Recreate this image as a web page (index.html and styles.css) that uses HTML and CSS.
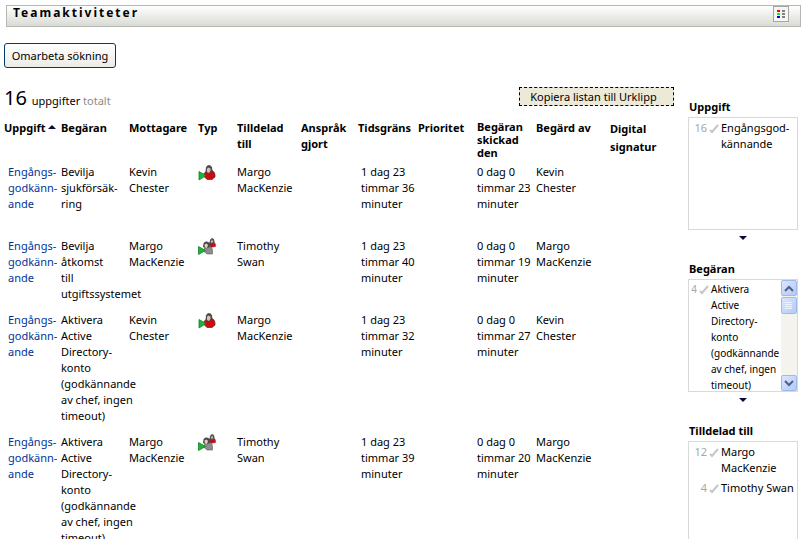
FILE: index.html
```html
<!DOCTYPE html>
<html lang="sv">
<head>
<meta charset="utf-8">
<title>Teamaktiviteter</title>
<link rel="stylesheet" href="styles.css">
</head>
<body>
<svg width="0" height="0" class="defs" aria-hidden="true">
  <symbol id="person" viewBox="0 0 18 17">
    <path d="M5.500 12Q6 7 10 8L14 6.500Q17 8 17 11V13L14 15.500H9Z" fill="#cc0a10" stroke="#7d2a2a" stroke-width=".8"/>
    <path d="M7.500 8L8 3.500Q8.500 1 11 1Q13.500 1 14 3.500L14.500 7L12 9L9.500 9Z" fill="#4a4a4c"/>
    <path d="M9 5L10 3.500L12.500 4.500V6.500L11 9L9 8Z" fill="#e0bfb4"/>
    <path d="M1 7.500L8 11.500L1 16Z" fill="#18b830" stroke="#1c7a2c" stroke-width=".8"/>
  </symbol>
  <symbol id="group" viewBox="0 0 18 17">
    <path d="M10 5.500L15 4Q18 4.500 17.500 8.500L12 9.500Z" fill="#cc0a10" stroke="#803838" stroke-width=".6"/>
    <path d="M11.500 5L12 2Q13 0 14.500 0Q16.500 1 16.500 3V5L14 6Z" fill="#58585a"/>
    <path d="M13 3L14.500 2L15 4L13.500 5Z" fill="#e0bfb4"/>
    <path d="M5.500 13Q6 9 9 10L12.500 8.500Q14.500 10 14.500 13V16H9Z" fill="#8c8c8c" stroke="#5a5a5a" stroke-width=".6"/>
    <path d="M5 9L5.500 5.500Q6.500 3 9 3.500L12 5L12.500 8L10 10L7 10Z" fill="#4a4a4c"/>
    <path d="M6.500 6.500L8.500 5.500L10 7L9 10L7 9.500Z" fill="#e8cbc0"/>
    <path d="M0.500 8.500L7.500 12.500L0.500 16.500Z" fill="#18b830" stroke="#1c7a2c" stroke-width=".8"/>
  </symbol>
  <symbol id="check" viewBox="0 0 10 10"><path d="M1 6L3 8L9 1" fill="none" stroke="#c6c6c6" stroke-width="2"/></symbol>
  <symbol id="down" viewBox="0 0 8 4"><path d="M0 0H8L4 4Z" fill="#0b0b3b"/></symbol>
</svg>
<header class="titlebar">
  <h1>Teamaktiviteter</h1>
  <button class="legend" aria-label="Förklaring">
    <svg width="8" height="8" viewBox="0 0 8 8" shape-rendering="crispEdges"><path d="M0 0h3v2H0z" fill="red"/><path d="M0 3h3v2H0z" fill="#0f0"/><path d="M0 6h3v2H0z" fill="#00f"/><path d="M5 0h3v2H5zM5 3h3v2H5zM5 6h3v2H5z" fill="#808080"/></svg>
  </button>
</header>
<div class="layout">
  <main>
    <button class="refine">Omarbeta sökning</button>
    <div class="summary">
      <p><span class="total">16</span> <span class="unit">uppgifter</span> <span class="muted">totalt</span></p>
      <button class="copy">Kopiera listan till Urklipp</button>
    </div>
    <table>
      <colgroup><col class="c-task"><col class="c-request"><col class="c-recipient"><col class="c-type"><col class="c-assigned"><col class="c-claimed"><col class="c-deadline"><col class="c-priority"><col class="c-sent"><col class="c-by"><col></colgroup>
      <thead>
        <tr>
          <th>Uppgift <svg class="sort" width="8" height="4" viewBox="0 0 8 4"><path d="M0 4H8L4 0Z" fill="#0b0b3b"/></svg></th>
          <th>Begäran</th><th>Mottagare</th><th>Typ</th><th>Tilldelad<br>till</th><th>Anspråk<br>gjort</th><th>Tidsgräns</th><th>Prioritet</th><th class="tight">Begäran<br>skickad<br>den</th><th>Begärd av</th><th class="loose">Digital<br>signatur</th>
        </tr>
      </thead>
      <tbody>
        <tr>
          <td class="task"><a href="#">Engångs-<br>godkänn-<br>ande</a></td>
          <td>Bevilja<br>sjukförsäk-<br>ring</td><td>Kevin<br>Chester</td>
          <td><svg class="type" width="18" height="17"><use href="#person"/></svg></td>
          <td>Margo<br>MacKenzie</td><td></td><td class="due">1 dag 23<br>timmar 36<br>minuter</td><td></td><td>0 dag 0<br>timmar 23<br>minuter</td><td>Kevin<br>Chester</td><td></td>
        </tr>
        <tr>
          <td class="task"><a href="#">Engångs-<br>godkänn-<br>ande</a></td>
          <td>Bevilja<br>åtkomst<br>till<br>utgiftssystemet</td><td>Margo<br>MacKenzie</td>
          <td><svg class="type" width="18" height="17"><use href="#group"/></svg></td>
          <td>Timothy<br>Swan</td><td></td><td class="due">1 dag 23<br>timmar 40<br>minuter</td><td></td><td>0 dag 0<br>timmar 19<br>minuter</td><td>Margo<br>MacKenzie</td><td></td>
        </tr>
        <tr>
          <td class="task"><a href="#">Engångs-<br>godkänn-<br>ande</a></td>
          <td>Aktivera<br>Active<br>Directory-<br>konto<br>(godkännande<br>av chef, ingen<br>timeout)</td><td>Kevin<br>Chester</td>
          <td><svg class="type" width="18" height="17"><use href="#person"/></svg></td>
          <td>Margo<br>MacKenzie</td><td></td><td class="due">1 dag 23<br>timmar 32<br>minuter</td><td></td><td>0 dag 0<br>timmar 27<br>minuter</td><td>Kevin<br>Chester</td><td></td>
        </tr>
        <tr>
          <td class="task"><a href="#">Engångs-<br>godkänn-<br>ande</a></td>
          <td>Aktivera<br>Active<br>Directory-<br>konto<br>(godkännande<br>av chef, ingen<br>timeout)</td><td>Margo<br>MacKenzie</td>
          <td><svg class="type" width="18" height="17"><use href="#group"/></svg></td>
          <td>Timothy<br>Swan</td><td></td><td class="due">1 dag 23<br>timmar 39<br>minuter</td><td></td><td>0 dag 0<br>timmar 20<br>minuter</td><td>Margo<br>MacKenzie</td><td></td>
        </tr>
      </tbody>
    </table>
  </main>
  <aside>
    <section>
      <h2>Uppgift</h2>
      <div class="box"><ul>
        <li><span class="count">16</span><svg width="10" height="10"><use href="#check"/></svg><span>Engångsgod-<br>kännande</span></li>
      </ul></div>
      <svg class="more" width="8" height="4"><use href="#down"/></svg>
    </section>
    <section>
      <h2>Begäran</h2>
      <div class="box scrolling"><ul>
        <li><span class="count">4</span><svg width="10" height="10"><use href="#check"/></svg><span>Aktivera<br>Active<br>Directory-<br>konto<br>(godkännande<br>av chef, ingen<br>timeout)</span></li>
      </ul>
      <div class="scrollbar">
        <button aria-label="Rulla upp"><svg width="10" height="7" viewBox="0 0 10 7"><path d="M1 6L5 2L9 6" fill="none" stroke="#4d6185" stroke-width="2"/></svg></button>
        <div class="thumb"><svg width="8" height="8" viewBox="0 0 8 8" shape-rendering="crispEdges"><path d="M0 0h7v1H0zM0 2h7v1H0zM0 4h7v1H0zM0 6h7v1H0z" fill="#eef4fe"/></svg></div>
        <button class="end" aria-label="Rulla ned"><svg width="10" height="7" viewBox="0 0 10 7"><path d="M1 1L5 5L9 1" fill="none" stroke="#4d6185" stroke-width="2"/></svg></button>
      </div></div>
      <svg class="more" width="8" height="4"><use href="#down"/></svg>
    </section>
    <section>
      <h2>Tilldelad till</h2>
      <div class="box"><ul>
        <li><span class="count">12</span><svg width="10" height="10"><use href="#check"/></svg><span>Margo<br>MacKenzie</span></li>
        <li><span class="count">4</span><svg width="10" height="10"><use href="#check"/></svg><span>Timothy Swan</span></li>
      </ul></div>
    </section>
  </aside>
</div>
</body>
</html>
```
FILE: styles.css
```css
* { box-sizing: border-box; }
html { overflow: hidden; }
body {
  margin: 0;
  padding: 5px 5px 0 4px;
  background: #fff;
  color: #000;
  font: 11px/16px "Noto Sans", "Open Sans", sans-serif;
  white-space: nowrap;
}
.defs { display: none; }
h1, h2, p, ul { margin: 0; padding: 0; }
button { font: inherit; color: inherit; padding: 0; }

.titlebar {
  display: flex;
  justify-content: space-between;
  height: 22px;
  margin-left: 2px;
  padding: 0 11px 0 6px;
  border: 1px solid #b5b7b1;
  background: linear-gradient(#fff, #d9dbd5);
}
.titlebar h1 { font-size: 12px; line-height: 14px; letter-spacing: 2px; }
.legend {
  display: flex;
  align-items: center;
  justify-content: center;
  width: 16px;
  height: 16px;
  border: 1px solid #a5a79e;
  background: #f6f6f4;
}

.layout { display: flex; gap: 14px; padding-right: 3px; }
main { flex: 1; min-width: 0; padding-top: 16px; }
.refine {
  display: block;
  width: 112px;
  height: 25px;
  border: 1px solid #003c74;
  border-radius: 3px;
  background: linear-gradient(#fff, #ecebe5);
}
.summary {
  display: flex;
  justify-content: space-between;
  align-items: flex-start;
  height: 52px;
  padding-top: 19px;
}
.summary p { line-height: 22px; }
.total { font-size: 20px; }
.unit { padding-left: 2px; }
.muted { color: #8c8c8c; }
.copy {
  width: 155px;
  height: 19px;
  padding-right: 6px;
  border: 1px dashed #000;
  background: #ece9d8;
  line-height: 16px;
}

table { width: 100%; table-layout: fixed; border-collapse: collapse; }
th, td { padding: 0; vertical-align: top; text-align: left; }
.c-task { width: 57px; }
.c-request { width: 68px; }
.c-recipient { width: 69px; }
.c-type { width: 39px; }
.c-assigned { width: 64px; }
.c-claimed { width: 57px; }
.c-deadline { width: 60px; }
.c-priority { width: 59px; }
.c-sent { width: 59px; }
.c-by { width: 74px; }
thead tr { height: 39px; }
.tight { line-height: 13px; }
.loose { line-height: 18px; }
.sort { vertical-align: 3px; }
tbody tr { height: 74px; }
td { padding: 5px 0; }
td.task { padding-left: 4px; }
td.due { padding-left: 3px; }
.type { display: block; }
a { color: #039; text-decoration: none; }

aside { width: 110px; padding-top: 72px; }
section { height: 162px; }
h2 { font-size: 11px; line-height: 16px; padding-left: 1px; }
.box {
  display: flex;
  height: 113px;
  margin-top: 2px;
  border: 1px solid #d9d9d9;
  overflow: hidden;
}
ul { flex: 1; min-width: 0; padding-top: 2px; list-style: none; }
li { display: flex; gap: 2px; padding-bottom: 4px; }
li svg { flex: none; margin-top: 4px; }
.count { width: 18px; flex: none; text-align: right; color: #a6a6a6; }
.scrolling ul { padding-top: 1px; font-size: 10px; }
.scrolling .count { width: 8px; }
.more { display: block; margin: 6px auto 0; }
.scrollbar { display: flex; flex-direction: column; gap: 1px; width: 16px; background: #f4f3ee; }
.scrollbar button, .thumb {
  display: flex;
  align-items: center;
  justify-content: center;
  width: 16px;
  height: 16px;
  border: 1px solid #9db9ee;
  border-radius: 2px;
  background: linear-gradient(135deg, #dbe6ff, #b4c9f6);
}
.scrollbar .thumb { height: 17px; }
.scrollbar .end { margin-top: auto; }
```
